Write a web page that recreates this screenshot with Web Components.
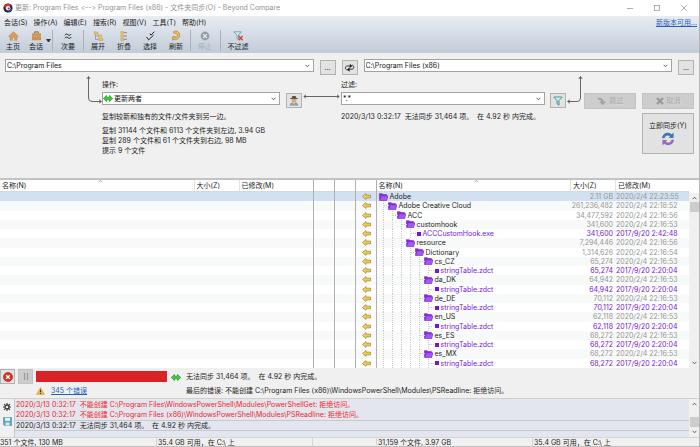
<!DOCTYPE html>
<html lang="zh-CN">
<head>
<meta charset="utf-8">
<title>文件夹同步 - Beyond Compare</title>
<style>
html,body{margin:0;height:100%}
body{font:7px/10px Inter,"Noto Sans CJK SC",sans-serif;font-feature-settings:"calt" 0;color:#1c1c1c;background:#f0f0f0}
</style>
</head>
<body>
<bc-app></bc-app>
<script>
const svg=(w,h,body,vb)=>`<svg width="${w}" height="${h}" viewBox="${vb||`0 0 ${w} ${h}`}" fill="none" aria-hidden="true">${body}</svg>`;
const ICON={
 logo:svg(10,10,'<circle cx="5" cy="5" r="4.6" fill="#23242c"/><path d="M1 3.4C2 .9 5.500 0 7.800 1.800L6.500 4.200 3 5.800Z" fill="#d8342c"/><circle cx="5.200" cy="5.300" r="2.300" fill="#eef0f4"/><circle cx="5.800" cy="5.500" r="1.100" fill="#2b55a8"/><path d="M5 8.400 8.800 5.800 8.300 8.300Z" fill="#2e4f9a"/>'),
 home:svg(11,10,'<path d="M5.500.6.6 5.300 1.500 6.100 2 5.700V9.300H4.500V6.600H6.500V9.300H9V5.700L9.500 6.100 10.400 5.300Z" fill="#d79d5c" stroke="#b97f3e" stroke-width=".4"/>'),
 bag:svg(11,10,'<path d="M3.700 2.300V.9H7.300V2.300" stroke="#77552f" stroke-width=".9"/><rect x="1" y="2.300" width="9" height="7" rx=".6" fill="#cf9350"/><path d="M1 5.200H10" stroke="#dfae76" stroke-width=".6"/>'),
 approx:svg(10,10,'<path d="M1.800 4.200C3 2.600 4 3 5 3.800S7.200 4.500 8.200 3M1.800 7.200C3 5.600 4 6 5 6.800S7.200 7.500 8.200 6" stroke="#222" stroke-width="1"/>'),
 expand:svg(11,10,'<path d="M2.500 2V8.500H6M2.500 5H6" stroke="#8a8a8a" stroke-width=".7"/><path d="M1 .8H3L3.500 1.400H5V3.200H1ZM5.500 3.700H7L7.500 4.200H9V6H5.500ZM5.500 7H7L7.500 7.500H10V9.400H5.500Z" fill="#e8c667" stroke="#b89340" stroke-width=".4"/>'),
 collapse:svg(11,10,'<path d="M4.500 1.600H8M4.500 5H8M4.500 8.300H8" stroke="#777" stroke-width=".8"/><path d="M1.800.6H4.600V2.700H1.800ZM1.800 3.900H4.600V6.100H1.800ZM1.800 7.200H4.600V9.400H1.800Z" fill="#e8c667" stroke="#b89340" stroke-width=".4"/>'),
 check:svg(11,10,'<path d="M5 2.700 6 4.200 9.400.6M1.500 6 3.700 8.800 8.500 4.200" stroke="#222" stroke-width="1"/>'),
 refresh:svg(10,11,'<path d="M2 2.400C4-.2 8.600.8 8.600 5 8.600 8.600 5.500 10.300 2.600 9.300L2 10.300 1 7 4.300 6.500 3.700 7.600C5.200 8 6.400 7 6.400 5.300 6.400 3.500 5 2.800 3.700 3.500Z" fill="#edbe4c" stroke="#a77c22" stroke-width=".6"/>'),
 stop:svg(10,10,'<circle cx="5" cy="5" r="4.400" fill="#9b9fa5"/><path d="M3.200 3.200 6.800 6.800M6.800 3.200 3.200 6.800" stroke="#e9edf1" stroke-width="1.200"/>'),
 nofilter:svg(11,10,'<path d="M.8.800H8.300L5.500 4V8.500L4 7.500V4Z" fill="#cfeef0" stroke="#4f8f98" stroke-width=".7"/><path d="M5.800 5 9.600 9.300M9.600 5 5.800 9.300" stroke="#d9402c" stroke-width="1.300"/>'),
 funnel:svg(10,10,'<path d="M.8 1H9.200L6 4.500V9.200L4 7.800V4.500Z" fill="#c9f0f1" stroke="#3f7f88" stroke-width=".8"/><path d="M5 4.500V8" stroke="#3aa9b0" stroke-width=".8"/>'),
 swap:svg(11,11,'<path d="M5.500 7.800H3.200C.8 7.800.8 4 3.200 4H6.300M5.500 7.200H8C10.300 7.200 10.300 3.200 8 3.200" stroke="#222" stroke-width=".9"/><path d="M5.800 1.800 8.400 4 5.800 6ZM5.600 5.300 3 7.500 5.600 9.700Z" fill="#222"/>'),
 agent:svg(10,11,'<path d="M2.700 4H7.300V5.600C7.300 7 6.200 7.800 5 7.800S2.700 7 2.700 5.600Z" fill="#e2a765"/><path d="M2.600 3.200 3.300.9H6.700L7.400 3.200Z" fill="#555"/><path d="M1.200 3.500H8.800" stroke="#3a3a3a" stroke-width=".8"/><path d="M.8 10.500C1 8.500 2.500 7.600 3.300 7.500L5 9 6.700 7.500C7.500 7.600 9 8.500 9.200 10.500Z" fill="#858585"/><path d="M3 8.300V10.400M5 9.200V10.400M7 8.300V10.400" stroke="#e4e4e4" stroke-width=".6"/>'),
 both:svg(10,7,'<path d="M.3 3.500 3.500.4V2.200H6.500V.4L9.700 3.500 6.500 6.600V4.800H3.500V6.600Z" fill="#46c83c" stroke="#177d18" stroke-width=".6"/>'),
 skip:svg(10,9,'<path d="M.8.800C4 .6 6.300 1.800 6.500 4.500H9.200L5.600 8.300 2.500 4.500H4.500C4.300 3.300 3 2.500.800 2.500Z" fill="#a2a2a2"/>'),
 cross:svg(8,8,'<path d="M1 1 7 7M7 1 1 7" stroke="#999" stroke-width="2.200"/>'),
 sync:svg(14,14,'<path d="M1 6.300C1.500 1.300 7-.8 10.500 2.300L12.600.8V6H7.800L9 4.300C6.800 2.600 4 3.600 3.500 6.300Z" fill="#3f78b5"/><path d="M13 7.700C12.500 12.700 7 14.800 3.500 11.700L1.400 13.200V8H6.200L5 9.700C7.200 11.400 10 10.400 10.500 7.700Z" fill="#9a67bf"/>'),
 arrow:svg(9,7,'<path d="M.5 3.500 4 .5V2.100H8.500V4.900H4V6.500Z" fill="#f1cd52" stroke="#94762b" stroke-width=".6"/>'),
 folder:svg(9,8,'<path d="M.3.700H3.300L4 1.600H7.500V2.800H8.900L7.700 7.600H.6Z" fill="#8a2be2" stroke="#5c14a6" stroke-width=".5"/><path d="M1.300 7.200 2.300 3.200H8.500L7.500 7.200Z" fill="#a458f2"/>'),
 abort:svg(10,10,'<circle cx="5" cy="5" r="4.600" fill="#dd3325" stroke="#7e1b13" stroke-width=".5"/><path d="M3.200 3.200 6.800 6.800M6.800 3.200 3.200 6.800" stroke="#fff" stroke-width="1.300"/>'),
 pause:svg(8,9,'<path d="M2.500 1V8M5.500 1V8" stroke="#999" stroke-width="1.200"/>'),
 warn:svg(9,8,'<path d="M4.500.5 8.600 7.600H.4Z" fill="#e9b34d" stroke="#c08a30" stroke-width=".4"/><path d="M4.500 2.600V5.200M4.500 5.900V6.900" stroke="#222" stroke-width=".9"/>'),
 gear:svg(8,8,'<circle cx="4" cy="4" r="2" stroke="#333" stroke-width="1.300"/><path d="M4 0V1.600M4 6.400V8M0 4H1.600M6.400 4H8M1.200 1.200 2.300 2.300M5.700 5.700 6.800 6.800M6.800 1.200 5.700 2.300M2.300 5.700 1.200 6.800" stroke="#333" stroke-width="1.100"/>'),
 disk:svg(9,9,'<path d="M.5.500H8.500V8.500H1.500L.5 7.500Z" fill="#5fa6bf" stroke="#3d7d96" stroke-width=".5"/><rect x="2" y=".8" width="5" height="3" fill="#e8f3f7"/><rect x="2.500" y="5.500" width="4" height="3" fill="#dfeaf0"/>'),
 down:svg(5,4,'<path d="M.6.800 2.500 2.800 4.400.800" stroke="#444" stroke-width=".8"/>'),
 up:svg(5,4,'<path d="M.6 3.200 2.500 1.200 4.400 3.200" stroke="#444" stroke-width=".8"/>'),
 min:svg(6,6,'<path d="M0 3.500H6" stroke="#999" stroke-width=".8"/>'),
 max:svg(6,6,'<rect x=".5" y=".5" width="5" height="5" stroke="#999" stroke-width=".8"/>'),
 close:svg(6,6,'<path d="M.3.300 5.700 5.700M5.700.300.300 5.700" stroke="#999" stroke-width=".8"/>'),
 linkL:svg(16,32,'<path d="M2.500 2V23Q2.500 26.500 6 26.500H15M.8 4 2.500 1.500 4.200 4M13 24.800 15.500 26.500 13 28.200" stroke="#444" stroke-width=".8"/>'),
 linkM:svg(37,5,'<path d="M1 2.500H36M3 .8.800 2.500 3 4.200M34 .8 36.200 2.500 34 4.200" stroke="#444" stroke-width=".8"/>'),
 linkR:svg(18,32,'<path d="M14.500 2V23Q14.500 26.500 11 26.500H2M12.800 4 14.500 1.500 16.200 4M4 24.800 1.500 26.500 4 28.200" stroke="#444" stroke-width=".8"/>')
};
const BASE=`*{box-sizing:border-box}svg{display:block;flex:none}button,select{font:inherit;font-feature-settings:inherit;color:inherit;margin:0;border-radius:0}button{padding:0}p{margin:0}a{color:#1f5fc4}`;
class Base extends HTMLElement{
 connectedCallback(){
  if(this.shadowRoot)return;
  this.attachShadow({mode:'open'}).innerHTML=`<style>${BASE}${this.css()}</style>${this.html()}`;
 }
 at(n,d=''){return this.getAttribute(n)??d}
}
const def=(tag,css,html)=>customElements.define(tag,class extends Base{css(){return css}html(){return html(this)}});

def('bc-title',`:host{display:flex;align-items:center;height:16px;padding:0 12px 0 3px;gap:2px;background:#fff;color:#929292}
span{flex:1}nav{display:flex;gap:21px}button{border:0;background:none}`,
()=>`${ICON.logo}<span>更新: Program Files &lt;--&gt; Program Files (x86) - 文件夹同步(O) - Beyond Compare</span><nav><button aria-label="最小化">${ICON.min}</button><button aria-label="最大化">${ICON.max}</button><button aria-label="关闭">${ICON.close}</button></nav>`);

def('bc-menu',`:host{display:flex;align-items:center;height:14px;padding:0 2px 0 4px;gap:6px}
button{border:0;background:none;white-space:nowrap}a{margin-left:auto}`,
()=>['会话(S)','操作(A)','编辑(E)','搜索(R)','视图(V)','工具(T)','帮助(H)'].map(t=>`<button>${t}</button>`).join('')+'<a href="#">新版本可用...</a>');

def('bc-tool',`:host{display:block}
button{display:flex;flex-direction:column;align-items:center;gap:1px;width:100%;border:0;background:none;white-space:nowrap}
button:disabled{color:#a7adb6}span{height:10px}.i{height:11px;display:flex;align-items:center}`,
e=>`<button ${e.hasAttribute('disabled')?'disabled':''}><span class="i">${ICON[e.at('icon')]}</span><span><slot></slot></span></button>`);

def('bc-toolbar',`:host{display:flex;height:23px;align-items:flex-start}
bc-tool{width:26px}bc-tool.s{width:20px}i{width:1px;height:21px;background:#a9b1bc;margin:0 2px}i.w{margin:0 1px}
.dd{width:5px;border:0;background:none;height:20px}.dd:after{content:"";display:block;border:2px solid transparent;border-top:3px solid #333;border-bottom:0}`,
()=>`<bc-tool icon="home">主页</bc-tool><bc-tool class="s" icon="bag">会话</bc-tool><button class="dd" aria-label="会话列表"></button><i class="w"></i><bc-tool icon="approx" style="width:28px">次要</bc-tool><i class="w"></i><bc-tool icon="expand">展开</bc-tool><bc-tool icon="collapse">折叠</bc-tool><bc-tool icon="check">选择</bc-tool><bc-tool icon="refresh">刷新</bc-tool><i class="w"></i><bc-tool icon="stop" disabled>停止</bc-tool><i></i><bc-tool icon="nofilter" style="width:30px">不过滤</bc-tool>`);

def('bc-combo',`:host{display:grid;height:13px;min-width:0;background:#fff;border:1px solid #a3a3a3;align-items:center}
select,.l,.r{grid-area:1/1}select{appearance:none;width:100%;height:100%;border:0;background:none;padding:0 10px 0 1px;color:#111}
:host([icon]) select{padding-left:11px}.r{justify-self:end;padding-right:3px;pointer-events:none}.l{pointer-events:none}`,
e=>`<select aria-label="${e.at('label')}"><option>${e.at('value')}</option></select>${e.at('icon')?`<span class="l">${ICON[e.at('icon')]}</span>`:''}<span class="r">${ICON.down}</span>`);

def('bc-button',`:host{display:block;width:16px;height:15px;flex:none}
button{display:flex;align-items:center;justify-content:center;gap:3px;width:100%;height:100%;border:1px solid #b2b2b2;background:#e2e2e2;white-space:nowrap}
button:disabled{background:#cdcdcd;border-color:#c3c3c3;color:#a8a8a8;text-shadow:1px 1px #dcdcdc}
:host([stack]) button{flex-direction:column-reverse;gap:1px}`,
e=>`<button ${e.hasAttribute('disabled')?'disabled':''} aria-label="${e.at('label')}">${e.at('icon')?ICON[e.at('icon')]:''}<slot></slot></button>`);

def('bc-paths',`:host{display:flex;gap:6px;padding:6px 5px 0;height:22px}
bc-combo{flex:1}bc-button{margin-top:1px}`,
()=>`<bc-combo label="左侧路径" value="C:\\Program Files"></bc-combo><bc-button label="浏览">...</bc-button><bc-button icon="swap" label="交换"></bc-button><bc-combo label="右侧路径" value="C:\\Program Files (x86)"></bc-combo><bc-button label="浏览">...</bc-button>`);

def('bc-settings',`:host{display:flex;align-items:flex-start;height:103px;padding-right:5px;white-space:nowrap}
.link{flex:none;display:flex;justify-content:flex-end}.a{flex:178;min-width:0}.f{flex:204;min-width:0}
.h{padding-top:5px;height:17px}.b{margin-top:18px}.t{margin:7px 0 4px}
.act{display:grid;grid-template-columns:52px 52px;gap:4px 6px;padding-top:18px}
.act bc-button{width:auto;height:16px}.act .go{grid-column:2;height:41px}`,
()=>`<div class="link" style="width:102px">${ICON.linkL}</div>
<div class="a"><p class="h">操作:</p><bc-combo label="操作" icon="both" value="更新两者"></bc-combo><p class="t">复制较新和独有的文件/文件夹到另一边。</p><p>复制 31144 个文件和 6113 个文件夹到左边, 3.94 GB</p><p>复制 289 个文件和 61 个文件夹到右边, 98 MB</p><p>提示 9 个文件</p></div>
<bc-button class="b" style="margin-left:6px" icon="agent" label="规则"></bc-button>
<div class="link" style="width:39px;padding:19px 1px 0">${ICON.linkM}</div>
<div class="f"><p class="h">过滤:</p><bc-combo label="过滤" value="*.*"></bc-combo><p class="t">2020/3/13 0:32:17&nbsp; 无法同步 31,464 项。&nbsp; 在 4.92 秒 内完成。</p></div>
<bc-button class="b" style="margin-left:5px" icon="funnel" label="过滤器"></bc-button>
<div class="link" style="width:18px">${ICON.linkR}</div>
<div class="act"><bc-button disabled icon="skip" label="跳过">跳过</bc-button><bc-button disabled icon="cross" label="取消">取消</bc-button><bc-button class="go" stack icon="sync" label="立即同步">立即同步(Y)</bc-button></div>`);

const ROWS=[
 [0,'Adobe','2.11 GB','2020/2/4 22:23:55'],[1,'Adobe Creative Cloud','261,236,482','2020/2/4 22:18:52'],
 [2,'ACC','34,477,592','2020/2/4 22:16:56'],[3,'customhook','341,600','2020/2/4 22:16:53'],
 [4,'ACCCustomHook.exe','341,600','2017/9/20 2:42:48',1],[3,'resource','7,294,446','2020/2/4 22:16:56'],
 [4,'Dictionary','1,314,626','2020/2/4 22:16:54']];
for(const [n,s] of [['cs_CZ','65,274'],['da_DK','64,942'],['de_DE','70,112'],['en_US','62,118'],['es_ES','68,272'],['es_MX','68,272']])
 ROWS.push([5,n,s,'2020/2/4 22:16:53'],[6,'stringTable.zdct',s,'2017/9/20 2:20:04',1]);

const GRID=`table{width:100%;height:100%;border-collapse:separate;border-spacing:0;table-layout:fixed;background:#fff}
th,td{padding:0;line-height:9px;white-space:nowrap;overflow:hidden}
th{height:12px}th{font-weight:400;text-align:left;border-bottom:1px solid #d5d9de}
tbody tr:nth-child(even){background:#f8faf9}tbody tr:first-child{background:#d2e1f1}`;

def('bc-pane',`:host{display:block;flex:1;min-width:0}${GRID}
th{padding-left:2px}th+th{border-left:1px solid #e2e2e2;}
th div{display:flex;justify-content:space-between}th i{width:50%;margin-top:-2px}
.sz{width:45px}.dt{width:74px}
td.n>div{display:flex;align-items:center;padding-left:2px;gap:2px;height:9px}
u{width:9px;align-self:stretch;margin-right:-2px;border-left:1px dotted #ccc;flex:none;position:relative;left:4px}
u:last-of-type:after{content:"";position:absolute;left:0;top:4px;width:5px;border-top:1px dotted #ccc}
.sq{width:4px;height:4px;background:#7416d8;margin-left:2px}
.g{color:#959595}td.z{text-align:right;padding-right:2px}td.d{padding-left:1px}.f{color:#7416d8}`,
e=>`<table><colgroup><col><col class="sz"><col class="dt"></colgroup><thead><tr><th><div>名称(N)<i>${ICON.up.replace('#444','#999')}</i></div></th><th>大小(Z)</th><th>已修改(M)</th></tr></thead><tbody>${ROWS.map(([l,n,s,d,f])=>e.hasAttribute('empty')?'<tr><td>&nbsp;</td><td></td><td></td></tr>':`<tr class="${f?'f':''}"><td class="n"><div>${'<u></u>'.repeat(l)}${f?'<b class="sq"></b>':ICON.folder}<span>${n}</span></div></td><td class="z ${f?'':'g'}">${s}</td><td class="d ${f?'':'g'}">${d}</td></tr>`).join('')}</tbody></table>`);

def('bc-gutter',`:host{display:block;width:21px;flex:none;border-left:1px solid #b0b0b0}:host([arrows]){border-right:1px solid #b0b0b0;width:22px}${GRID}
svg{margin:0 auto 0 6px}`,
e=>`<table><thead><tr><th>&nbsp;</th></tr></thead><tbody>${ROWS.map(()=>`<tr><td>${e.hasAttribute('arrows')?ICON.arrow:'&nbsp;'}</td></tr>`).join('')}</tbody></table>`);

def('bc-scroll',`:host{display:flex;flex-direction:column;align-items:center;justify-content:space-between;width:10px;flex:none;padding:3px 0;background:#f0f0f0}
i{width:9px;background:#cdcdcd;height:10px}b{flex:1}`,
e=>`${ICON.up}${e.at('thumb')==='end'?'<b></b><i></i>':'<i style="margin-top:2px"></i><b></b>'}<b style="flex:none;height:3px"></b>${ICON.down}`);

def('bc-compare',`:host{display:flex;flex:1;border-top:2px solid #c3c3c3;background:#fff}
.s{display:flex;flex-direction:column;background:#fff;padding-top:13px}bc-scroll{flex:1}`,
()=>`<bc-pane empty></bc-pane><bc-gutter></bc-gutter><bc-gutter></bc-gutter><bc-gutter arrows></bc-gutter><bc-pane></bc-pane><div class="s"><bc-scroll></bc-scroll></div>`);

def('bc-progress',`:host{display:grid;grid-template-columns:15px 15px 131px 1fr;column-gap:3px;height:30px;padding-top:1px;align-items:start;white-space:nowrap}
bc-button{width:15px;height:15px}.bar{height:11px;background:#da2327;margin-top:2px}
p{display:flex;align-items:center;gap:5px;padding-left:1px}.e{grid-column:3;display:flex;gap:6px;align-items:center}
.m{grid-column:4;padding-left:16px}.t{padding-top:3px}`,
()=>`<bc-button icon="abort" label="中止"></bc-button><bc-button disabled icon="pause" label="暂停"></bc-button><div class="bar" role="progressbar" aria-label="进度"></div><p class="t">${ICON.both}<span>无法同步 31,464 项。&nbsp; 在 4.92 秒 内完成。</span></p>
<div class="e">${ICON.warn}<a href="#">345 个错误</a></div><p class="m">最后的错误: 不能创建 C:\\Program Files (x86)\\WindowsPowerShell\\Modules\\PSReadline: 拒绝访问。</p>`);

def('bc-log',`:host{display:flex;height:39px;border-top:1px solid #cfcfcf;white-space:nowrap}
nav{width:14px;display:flex;flex-direction:column;align-items:center;gap:6px;padding-top:4px;flex:none}nav button{border:0;background:none}
ol{flex:1;margin:0;padding:1px 0 0;list-style:none;background:#e3e6ee;border-left:1px solid #c4c8ce;overflow:hidden}
li{height:10px;padding-left:1px;color:#f01f1f}li:last-child{height:11px;color:#1c1c1c;border:solid #c6cad0;border-width:1px 0}`,
()=>`<nav><button aria-label="设置">${ICON.gear}</button><button aria-label="保存">${ICON.disk}</button></nav><ol><li>2020/3/13 0:32:17&nbsp; 不能创建 C:\\Program Files\\WindowsPowerShell\\Modules\\PowerShellGet: 拒绝访问。</li><li>2020/3/13 0:32:17&nbsp; 不能创建 C:\\Program Files (x86)\\WindowsPowerShell\\Modules\\PSReadline: 拒绝访问。</li><li>2020/3/13 0:32:17&nbsp; 无法同步 31,464 项。&nbsp; 在 4.92 秒 内完成。</li></ol><bc-scroll thumb="end"></bc-scroll>`);

def('bc-status',`:host{display:grid;grid-template-columns:156fr 156fr 64fr 156fr 167fr;height:10px;border-top:1px solid #d5d5d5;border-bottom:1px solid #c0c0c0;white-space:nowrap;line-height:9px}
span+span{border-left:1px solid #d5d5d5;padding-left:1px}`,
()=>`<span>351 个文件, 130 MB</span><span>35.4 GB 可用，在 C:\\ 上</span><span></span><span>31,159 个文件, 3.97 GB</span><span>35.4 GB 可用，在 C:\\ 上</span>`);

def('bc-app',`:host{display:flex;flex-direction:column;min-height:100vh;border-right:1px solid #b5b5b5;background:#f0f0f0;box-sizing:border-box}
header{background:linear-gradient(#e9edf2,#d8dee7 45%,#c1cbd8)}`,
()=>`<bc-title></bc-title><header><bc-menu></bc-menu><bc-toolbar></bc-toolbar></header><bc-paths></bc-paths><bc-settings></bc-settings><bc-compare></bc-compare><bc-progress></bc-progress><bc-log></bc-log><bc-status></bc-status>`);
</script>
</body>
</html>
